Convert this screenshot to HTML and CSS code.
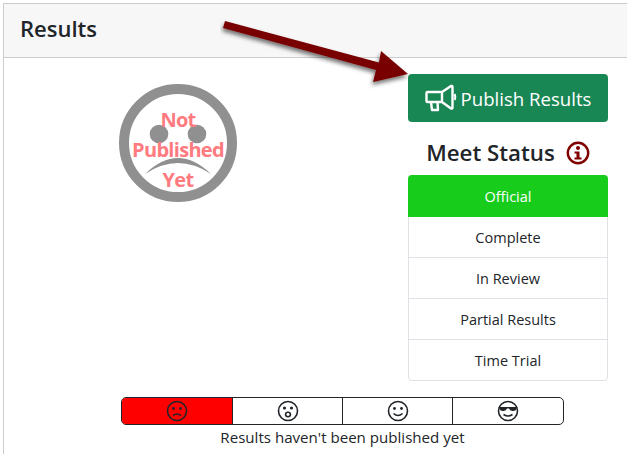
FILE: index.html
```html
<!DOCTYPE html>
<html lang="en">
<head>
	<meta charset="UTF-8">
	<title>Results</title>
	<link rel="stylesheet" href="styles.css">
</head>
<body>
	<div class="card">
		<div class="card-header">Results</div>
		<div class="card-body">
			<div class="top">
				<div class="face">
					<svg class="face-pic" width="118" height="118" viewBox="0 0 118 118">
						<circle cx="59" cy="59" r="54" fill="#fff" stroke="#909090" stroke-width="10"/>
						<circle cx="40" cy="50" r="9.3" fill="#909090"/>
						<circle cx="78" cy="50" r="9.3" fill="#909090"/>
						<path d="M26 90 Q59 58 92 90 Q59 68 26 90 Z" fill="#909090"/>
					</svg>
					<div class="face-text">Not<br>Published<br>Yet</div>
				</div>
				<div class="side">
					<a href="#" class="publish">
						<svg class="horn" width="32" height="28" viewBox="0 0 32 28">
							<path d="M2.5 8 H17 L26 2 Q27.5 1.5 27.5 3 V23.5 Q27.5 25 26 24.5 L17 18 H2.5 Q1.5 18 1.5 17 V9 Q1.5 8 2.5 8 Z M17 8 V18 M6 18 L7 26 H13 L12.5 18" fill="none" stroke="#fff" stroke-width="2.4" stroke-linejoin="round"/>
							<path d="M29.5 10 Q31 13 29.5 16" fill="none" stroke="#fff" stroke-width="2"/>
						</svg>
						Publish Results
					</a>
					<h3 class="status-title">Meet Status
						<svg class="info" width="24" height="24" viewBox="0 0 24 24">
							<circle cx="12" cy="12" r="10.2" fill="#fff" stroke="#800000" stroke-width="2.4"/>
							<circle cx="12" cy="7" r="2" fill="#800000"/>
							<path d="M8.5 10.5 H13.5 V16.5 H15.5 V18.5 H8.5 V16.5 H10.5 V12.5 H8.5 Z" fill="#800000"/>
						</svg>
					</h3>
					<ul class="status-list">
						<li class="active">Official</li>
						<li>Complete</li>
						<li>In Review</li>
						<li>Partial Results</li>
						<li>Time Trial</li>
					</ul>
				</div>
			</div>
			<div class="rating">
				<div class="rating-bar">
					<div class="cell red">
						<svg width="22" height="22" viewBox="0 0 22 22">
							<circle cx="11" cy="11" r="9.5" class="line"/>
							<circle cx="7.5" cy="8.5" r="1.4" class="dot"/>
							<circle cx="14.5" cy="8.5" r="1.4" class="dot"/>
							<path d="M7 15.5 Q11 12.5 15 15.5" class="line"/>
						</svg>
					</div>
					<div class="cell">
						<svg width="22" height="22" viewBox="0 0 22 22">
							<circle cx="11" cy="11" r="9.5" class="line"/>
							<circle cx="7.5" cy="8" r="1.6" class="dot"/>
							<circle cx="14.5" cy="8" r="1.6" class="dot"/>
							<ellipse cx="11" cy="14.5" rx="2.4" ry="2.2" class="line"/>
						</svg>
					</div>
					<div class="cell">
						<svg width="22" height="22" viewBox="0 0 22 22">
							<circle cx="11" cy="11" r="9.5" class="line"/>
							<circle cx="7.5" cy="8.5" r="1.4" class="dot"/>
							<circle cx="14.5" cy="8.5" r="1.4" class="dot"/>
							<path d="M6.5 13.5 Q11 17.5 15.5 13.5" class="line"/>
						</svg>
					</div>
					<div class="cell">
						<svg width="22" height="22" viewBox="0 0 22 22">
							<circle cx="11" cy="11" r="9.5" class="line"/>
							<path d="M1.5 7 H20.5 L19.5 9 Q18.5 11.5 15.5 11 Q12.5 10.5 12 8.5 H10 Q9.5 10.5 6.5 11 Q3.5 11.5 2.5 9 Z" class="dot"/>
							<path d="M6.5 14.5 Q11 17.5 15.5 14.5" class="line"/>
						</svg>
					</div>
				</div>
				<div class="rating-text">Results haven't been published yet</div>
			</div>
		</div>
	</div>

	<!-- arrow pointing at the button -->
	<svg class="arrow" width="200" height="100" viewBox="0 0 200 100">
		<defs>
			<filter id="shade" x="-10%" y="-20%" width="120%" height="150%">
				<feDropShadow dx="-1" dy="3" stdDeviation="2" flood-color="#000" flood-opacity="0.55"/>
			</filter>
		</defs>
		<path d="M5 21 L3 28 L156 70 L153 82 L188 74 L161 51 L159 62.5 Z" fill="#780000" filter="url(#shade)"/>
	</svg>
</body>
</html>
```

FILE: styles.css
```css
*{
	margin:0;padding: 0;
	box-sizing: border-box;
}
html,body{
	height: 100%;
	overflow: hidden;
}
body{
	font-family: "Open Sans","Noto Sans",sans-serif;
	color: #212529;
	background: #ffffff;
	position: relative;
	display: flex;
	padding: 3px 0 0 3px;
}
ul{
	list-style: none;
}
a{
	text-decoration: none;
	color: #ffffff;
}
.card{
	flex: 1;
	border: 1px solid #cccccc;
	border-width: 1px 0 0 1px;
}
.card-header{
	height: 54px;
	padding-left: 16px;
	background: #f7f7f7;
	border-bottom: 1px solid #cccccc;
	font-size: 22px;
	font-weight: 600;
	line-height: 49px;
}
.card-body{
	padding-top: 16px;
}
.top{
	display: flex;
	align-items: flex-start;
}
.face{
	width: 118px;
	height: 118px;
	margin: 10px 171px 0 115px;
	position: relative;
}
.face-pic{
	display: block;
}
.face-text{
	position: absolute;
	left: 0;
	right: 0;
	top: 21px;
	text-align: center;
	color: #ff7b7f;
	font-size: 20px;
	font-weight: 700;
	line-height: 30px;
	letter-spacing: -0.7px;
}
.side{
	width: 200px;
}
.publish{
	display: flex;
	align-items: center;
	justify-content: center;
	gap: 4px;
	height: 48px;
	background: #198754;
	border-radius: 4px;
	font-size: 18.6px;
}
.status-title{
	display: flex;
	align-items: center;
	justify-content: center;
	gap: 11px;
	height: 53px;
	padding-top: 8px;
	font-size: 22.3px;
	font-weight: 600;
}
.status-list{
	border: 1px solid #dee2e6;
	border-radius: 4px;
}
.status-list li{
	height: 41px;
	line-height: 41px;
	text-align: center;
	font-size: 14.5px;
	border-top: 1px solid #dee2e6;
}
.status-list li.active{
	margin: -1px -1px 0;
	height: 42px;
	line-height: 43px;
	background: #18cc1c;
	color: #ffffff;
	border: 0;
	border-radius: 4px 4px 0 0;
}
.status-list li.active + li{
	height: 40px;
	border-top: 0;
}
.rating{
	width: 443px;
	margin: 16px 0 0 117px;
}
.rating-bar{
	display: flex;
	height: 28px;
	border: 1px solid #212529;
	border-radius: 5px;
	overflow: hidden;
}
.cell{
	flex: 0 0 110px;
	display: flex;
	align-items: center;
	justify-content: center;
	border-left: 1px solid #212529;
}
.cell:first-child{
	border-left: 0;
}
.cell:last-child{
	flex: 1;
}
.cell.red{
	background: #ff0000;
}
.line{
	fill: none;
	stroke: #212529;
	stroke-width: 1.6;
}
.dot{
	fill: #212529;
}
.rating-text{
	text-align: center;
	font-size: 15.1px;
	line-height: 25px;
}
.arrow{
	position: absolute;
	left: 220px;
	top: 0;
}
```
